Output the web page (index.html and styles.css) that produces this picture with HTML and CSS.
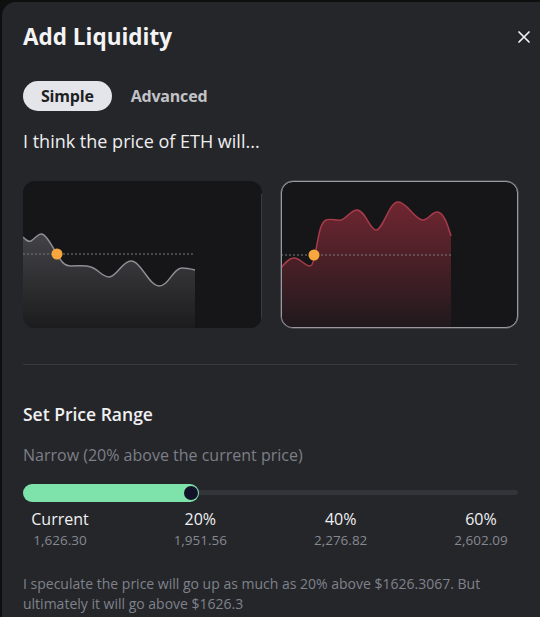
FILE: index.html
```html
<!DOCTYPE html>
<html lang="en">
<head>
<meta charset="utf-8">
<title>Add Liquidity</title>
<link rel="stylesheet" href="styles.css">
</head>
<body>
<div class="panel">
  <div class="header">
    <h1 class="title">Add Liquidity</h1>
    <button class="close" aria-label="Close">
      <svg width="12" height="12" viewBox="0 0 12 12"><path d="M1 1 L11 11 M11 1 L1 11" stroke="#f2f2f2" stroke-width="1.7" stroke-linecap="round"/></svg>
    </button>
  </div>

  <div class="tabs">
    <span class="tab active">Simple</span>
    <span class="tab">Advanced</span>
  </div>

  <p class="question">I think the price of ETH will...</p>

  <div class="cards">
    <div class="card card-down">
      <svg class="chart" width="239" height="147" viewBox="0 0 239 147">
        <defs>
          <linearGradient id="gDown" x1="0" y1="0" x2="0" y2="1">
            <stop offset="0" stop-color="#434347"/>
            <stop offset="1" stop-color="#1c1c1e"/>
          </linearGradient>
        </defs>
        <path d="M0,56 C3,59 5,61 8,60 C12,58 15,52 19,53 C25,55 29,66 34,73 C38,80 41,85 48,85 C56,85 62,84 68,86 C75,88 79,96 86,96 C94,96 99,80 108,80 C118,80 126,105 136,105 C146,105 150,87 159,87 C164,87 168,88 172,89 L172,147 L0,147 Z" fill="url(#gDown)"/>
        <path d="M0,56 C3,59 5,61 8,60 C12,58 15,52 19,53 C25,55 29,66 34,73 C38,80 41,85 48,85 C56,85 62,84 68,86 C75,88 79,96 86,96 C94,96 99,80 108,80 C118,80 126,105 136,105 C146,105 150,87 159,87 C164,87 168,88 172,89" fill="none" stroke="#8e8e92" stroke-width="1.5"/>
        <line x1="0" y1="73" x2="171" y2="73" stroke="#7a7a7e" stroke-width="1" stroke-dasharray="2 2"/>
        <circle cx="34" cy="73" r="5.5" fill="#f7a73e"/>
      </svg>
    </div>
    <div class="card card-up">
      <svg class="chart" width="237" height="145" viewBox="1 1 237 145">
        <defs>
          <linearGradient id="gUp" x1="0" y1="0" x2="0" y2="1">
            <stop offset="0" stop-color="#702631"/>
            <stop offset="1" stop-color="#1f191c"/>
          </linearGradient>
        </defs>
        <path d="M0,87 C4,82 8,77 13,77 C19,77 24,85 29,85 C32,85 33,78 34,73 C37,62 38,42 45,39 C50,37 55,40 60,39 C66,37 70,29 76,29 C84,29 89,49 95,49 C102,49 108,21 117,21 C126,21 134,39 142,39 C147,39 151,31 156,31 C163,31 167,45 170,55 L170,147 L0,147 Z" fill="url(#gUp)"/>
        <path d="M0,87 C4,82 8,77 13,77 C19,77 24,85 29,85 C32,85 33,78 34,73 C37,62 38,42 45,39 C50,37 55,40 60,39 C66,37 70,29 76,29 C84,29 89,49 95,49 C102,49 108,21 117,21 C126,21 134,39 142,39 C147,39 151,31 156,31 C163,31 167,45 170,55" fill="none" stroke="#a83b49" stroke-width="1.5"/>
        <line x1="0" y1="74" x2="170" y2="74" stroke="#7a7a7e" stroke-width="1" stroke-dasharray="2 2"/>
        <circle cx="33" cy="74" r="5.5" fill="#f7a73e"/>
      </svg>
    </div>
  </div>

  <hr class="divider">

  <h2 class="section-title">Set Price Range</h2>
  <p class="range-desc">Narrow (20% above the current price)</p>

  <div class="slider">
    <div class="track"></div>
    <div class="fill" style="width: 176px;">
      <span class="thumb"></span>
    </div>
  </div>

  <div class="ticks">
    <div class="tick"><span class="tick-label">Current</span><span class="tick-value">1,626.30</span></div>
    <div class="tick"><span class="tick-label">20%</span><span class="tick-value">1,951.56</span></div>
    <div class="tick"><span class="tick-label">40%</span><span class="tick-value">2,276.82</span></div>
    <div class="tick"><span class="tick-label">60%</span><span class="tick-value">2,602.09</span></div>
  </div>

  <p class="summary">I speculate the price will go up as much as 20% above $1626.3067. But ultimately it will go above $1626.3</p>
</div>
</body>
</html>
```

FILE: styles.css
```css
* { box-sizing: border-box; }

html, body {
  margin: 0;
  padding: 0;
  background: #0f0f10;
  height: 100%;
  overflow: hidden;
}

body {
  font-family: "Open Sans", "Noto Sans", "Liberation Sans", sans-serif;
  color: #f2f2f3;
}

.panel {
  margin: 2px 0 0 2px;
  min-height: 640px;
  background: #25262a;
  border-radius: 14px 0 0 0;
  padding: 18px 22px 0 21px;
}

.header {
  display: flex;
  align-items: center;
  justify-content: space-between;
  height: 34px;
}

.title {
  margin: 0;
  font-size: 22.5px;
  font-weight: 700;
  line-height: 30px;
  color: #f4f4f5;
  letter-spacing: 0;
}

.close {
  background: none;
  border: 0;
  padding: 0;
  width: 12px;
  height: 12px;
  margin-right: -12px;
  display: flex;
  cursor: pointer;
}

.tabs {
  display: flex;
  align-items: center;
  gap: 19px;
  margin-top: 27px;
}

.tab {
  font-size: 16px;
  font-weight: 700;
  line-height: 30px;
  color: #c2c3c7;
  letter-spacing: -0.2px;
}

.tab.active {
  background: #e3e5ea;
  color: #1e1f23;
  border-radius: 16px;
  padding: 0 18px;
}

.question {
  margin: 18px 0 0;
  font-size: 18px;
  line-height: 24px;
  color: #eeeef0;
}

.cards {
  display: grid;
  grid-template-columns: 239px 237px;
  justify-content: space-between;
  margin-top: 28px;
}

.card {
  height: 147px;
  border-radius: 12px;
  background: #161618;
  overflow: hidden;
  position: relative;
}

.card-down::after {
  content: "";
  position: absolute;
  right: 0;
  top: 13px;
  bottom: 0;
  width: 1px;
  background: #3c3c40;
}

.card-up {
  border: 1px solid #9a9a9e;
  box-shadow: 0 0 0 0.5px #6a6a6e;
}

.chart { display: block; }

.divider {
  border: 0;
  height: 1px;
  background: #393a3f;
  margin: 36px 0 0;
}

.section-title {
  margin: 37px 0 0;
  font-size: 17.5px;
  font-weight: 600;
  line-height: 24px;
  color: #f0f0f2;
}

.range-desc {
  margin: 17px 0 0;
  font-size: 16px;
  line-height: 24px;
  color: #7c7f87;
}

.slider {
  position: relative;
  height: 18px;
  margin-top: 17px;
  display: flex;
  align-items: center;
}

.track {
  position: absolute;
  left: 0;
  right: 0;
  top: 6px;
  height: 5px;
  border-radius: 3px;
  background: #34353a;
}

.fill {
  position: relative;
  height: 18px;
  border-radius: 9px;
  background: #7de3aa;
}

.thumb {
  position: absolute;
  right: 1px;
  top: 2px;
  width: 14px;
  height: 14px;
  border-radius: 50%;
  background: #12132a;
}

.ticks {
  display: flex;
  justify-content: space-between;
  margin-top: 6px;
}

.tick {
  width: 74px;
  display: flex;
  flex-direction: column;
  align-items: center;
}

.tick-label {
  font-size: 16px;
  line-height: 22px;
  color: #f0f0f2;
}

.tick-value {
  font-size: 13.5px;
  line-height: 20px;
  color: #858891;
}

.summary {
  margin: 24px 0 0;
  font-size: 14px;
  line-height: 20px;
  color: #7f828a;
}
```
